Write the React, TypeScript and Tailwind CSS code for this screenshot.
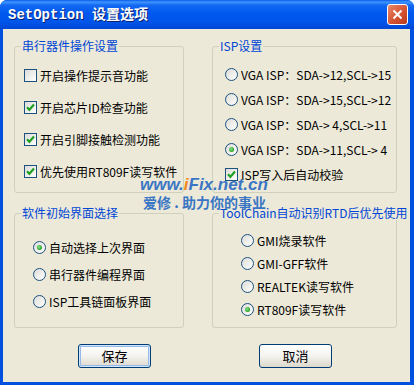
import React, { useState } from "react";

const FONT = { fontFamily: '"Noto Sans CJK SC", "Liberation Sans", sans-serif' };

const CheckBox: React.FC<{ checked: boolean; onClick: () => void }> = ({ checked, onClick }) => (
  <span
    onClick={onClick}
    className="w-[13px] h-[13px] shrink-0 border border-[#1C5180] bg-gradient-to-br from-[#DCDCD7] to-white flex items-center justify-center"
  >
    {checked && (
      <svg width="11" height="11" viewBox="0 0 11 11">
        <path d="M2 5.2 L4.4 7.8 L9 2.6" fill="none" stroke="#21A121" strokeWidth="2.2" />
      </svg>
    )}
  </span>
);

const Radio: React.FC<{ checked: boolean; onClick: () => void }> = ({ checked, onClick }) => (
  <span
    onClick={onClick}
    className="w-[13px] h-[13px] shrink-0 rounded-full border border-[#1C5180] bg-gradient-to-br from-[#DCDCD7] to-white flex items-center justify-center"
  >
    {checked && <span className="w-[5px] h-[5px] rounded-full bg-[radial-gradient(circle_at_40%_40%,#8EE08E,#21A121_70%)]" />}
  </span>
);

const GroupBox: React.FC<{ label: string; className?: string; children: React.ReactNode }> = ({
  label,
  className,
  children,
}) => (
  <div className={`relative border border-[#D0D0BF] rounded-[3px] ${className ?? ""}`}>
    <span className="absolute top-[-8px] left-[6px] px-[1px] bg-[#ECE9D8] text-[#0046D5] text-[12px] leading-[14px] whitespace-nowrap">
      {label}
    </span>
    {children}
  </div>
);

const Row: React.FC<{ control: React.ReactNode; text: string }> = ({ control, text }) => (
  <div className="flex items-center gap-[3px] h-[13px] text-[12px] leading-[13px] text-black whitespace-pre">
    {control}
    <span>{text}</span>
  </div>
);

export default function App() {
  const [checks, setChecks] = useState([false, true, true, true]);
  const [ispVerify, setIspVerify] = useState(true);
  const [isp, setIsp] = useState(3);
  const [startPage, setStartPage] = useState(0);
  const [tool, setTool] = useState(3);

  const ispModes = [
    "VGA ISP：SDA->12,SCL->15",
    "VGA ISP：SDA->15,SCL->12",
    "VGA ISP：SDA-> 4,SCL->11",
    "VGA ISP：SDA->11,SCL-> 4",
  ];
  const serialOpts = ["开启操作提示音功能", "开启芯片ID检查功能", "开启引脚接触检测功能", "优先使用RT809F读写软件"];
  const pages = ["自动选择上次界面", "串行器件编程界面", "ISP工具链面板界面"];
  const tools = ["GMI烧录软件", "GMI-GFF软件", "REALTEK读写软件", "RT809F读写软件"];

  return (
    <div className="w-[414px] h-[385px] bg-white" style={FONT}>
      <div className="w-full h-full flex flex-col rounded-t-[7px] overflow-hidden bg-[#0050E0]">
        {/* title bar */}
        <div className="h-[29px] shrink-0 flex items-center justify-between pl-[8px] pr-[6px] bg-[linear-gradient(to_bottom,#0A5CE8_0%,#3D95FF_7%,#1469F2_18%,#0058EE_45%,#0055EA_75%,#0046D4_100%)]">
          <span
            className="text-white font-bold text-[14px] leading-none [text-shadow:1px_1px_0_#0A1E6E]"
            style={{ fontFamily: '"Liberation Mono", "Noto Sans CJK SC", monospace' }}
          >
            SetOption 设置选项
          </span>
          <span className="w-[21px] h-[21px] rounded-[3px] border border-white bg-[linear-gradient(135deg,#E9876A,#D2502F_60%,#B8391E)] flex items-center justify-center">
            <svg width="11" height="11" viewBox="0 0 11 11">
              <path d="M1.5 1.5 L9.5 9.5 M9.5 1.5 L1.5 9.5" stroke="white" strokeWidth="2" />
            </svg>
          </span>
        </div>

        {/* client area */}
        <div className="relative flex-1 ml-[3px] mr-[4px] mb-[3px] bg-[#ECE9D8] pt-[17px] pl-[11px]">
          <div className="grid grid-cols-[170px_185px] grid-rows-[147px_115px] gap-x-[28px] gap-y-[20px]">
            <GroupBox label="串行器件操作设置" className="pl-[9px] pt-[22px] flex flex-col gap-[19px]">
              {serialOpts.map((t, i) => (
                <Row
                  key={t}
                  text={t}
                  control={
                    <CheckBox
                      checked={checks[i]}
                      onClick={() => setChecks((c) => c.map((v, j) => (j === i ? !v : v)))}
                    />
                  }
                />
              ))}
            </GroupBox>

            <GroupBox label="ISP设置" className="pl-[12px] pt-[21px] flex flex-col gap-[12px]">
              {ispModes.map((t, i) => (
                <Row key={t} text={t} control={<Radio checked={isp === i} onClick={() => setIsp(i)} />} />
              ))}
              <Row
                text="ISP写入后自动校验"
                control={<CheckBox checked={ispVerify} onClick={() => setIspVerify(!ispVerify)} />}
              />
            </GroupBox>

            <GroupBox label="软件初始界面选择" className="pl-[18px] pt-[27px] flex flex-col gap-[14px]">
              {pages.map((t, i) => (
                <Row key={t} text={t} control={<Radio checked={startPage === i} onClick={() => setStartPage(i)} />} />
              ))}
            </GroupBox>

            <GroupBox label="ToolChain自动识别RTD后优先使用" className="pl-[28px] pt-[20px] flex flex-col gap-[10px]">
              {tools.map((t, i) => (
                <Row key={t} text={t} control={<Radio checked={tool === i} onClick={() => setTool(i)} />} />
              ))}
            </GroupBox>
          </div>

          {/* buttons */}
          <div className="flex gap-[108px] ml-[64px] mt-[16px]">
            <button className="w-[73px] h-[24px] rounded-[3px] border border-[#003C74] bg-gradient-to-b from-white via-[#F4F3EE] to-[#DCD8CC] text-[13px] text-black shadow-[inset_0_0_0_1px_#CEE7FF,inset_0_0_0_2px_#98B8EA]">
              保存
            </button>
            <button className="w-[73px] h-[24px] rounded-[3px] border border-[#003C74] bg-gradient-to-b from-white via-[#F4F3EE] to-[#DCD8CC] text-[13px] text-black">
              取消
            </button>
          </div>

          {/* watermark */}
          <div className="absolute left-[137px] top-[147px] pointer-events-none text-[#3A76C4] leading-none">
            <div className="text-[17px] font-bold italic" style={{ fontFamily: '"Liberation Sans", sans-serif' }}>
              www.<span className="text-[#F08A1E]">i</span>Fix.net.cn
            </div>
            <div className="text-[14px] font-bold mt-[2px] ml-[3px] whitespace-pre">爱修 . 助力你的事业</div>
          </div>
        </div>
      </div>
    </div>
  );
}
